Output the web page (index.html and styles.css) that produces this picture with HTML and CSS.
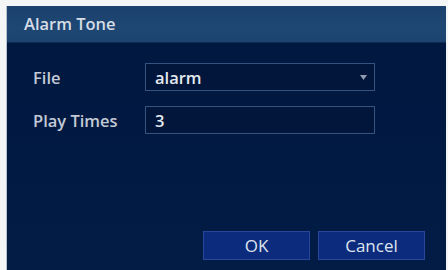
FILE: index.html
```html
<!DOCTYPE html>
<html>
<head>
<meta charset="utf-8">
<link rel="stylesheet" href="styles.css">
</head>
<body>
<div class="dialog">
  <div class="title">Alarm Tone</div>
  <div class="body">
    <div class="row">
      <div class="label">File</div>
      <div class="field select">
        <span>alarm</span>
        <svg class="arrow" width="7" height="5" viewBox="0 0 7 5"><path d="M0 0H7L3.5 5Z" fill="#8f9bb0"/></svg>
      </div>
    </div>
    <div class="row">
      <div class="label">Play Times</div>
      <div class="field"><span>3</span></div>
    </div>
    <div class="spacer"></div>
    <div class="buttons">
      <div class="btn">OK</div>
      <div class="btn">Cancel</div>
    </div>
  </div>
</div>
</body>
</html>
```
FILE: styles.css
```css
html, body {
  margin: 0;
  padding: 0;
  background: #f4f5f7;
  width: 448px;
  height: 270px;
  overflow: hidden;
  font-family: "Open Sans", "Noto Sans", sans-serif;
}
.dialog {
  margin: 6px 2px 0 7px;
  height: 264px;
  display: flex;
  flex-direction: column;
  background: #021a42;
  box-shadow: -1px 0 0 #b9c2cc;
}
.title {
  height: 37px;
  flex: none;
  background: linear-gradient(#1b416d, #1f4773 60%, #1d4470);
  border-bottom: 1px solid #0d2b52;
  color: #d6dde6;
  font-size: 16.5px;
  font-weight: 600;
  line-height: 36px;
  padding-left: 17px;
  box-sizing: border-box;
}
.body {
  flex: 1;
  display: flex;
  flex-direction: column;
  padding: 20px 23px 10px 26px;
  background: linear-gradient(#011840, #021c45);
}
.row {
  display: flex;
  align-items: center;
  margin-bottom: 15px;
}
.label {
  width: 112px;
  color: #c3cad6;
  font-size: 16.5px;
  font-weight: 600;
}
.field {
  width: 230px;
  height: 28px;
  box-sizing: border-box;
  border: 1px solid #36527e;
  background: #01163a;
  display: flex;
  align-items: center;
  padding: 0 7px 0 9px;
  color: #e4e9f0;
  font-size: 16.5px;
  font-weight: 600;
}
.field span { flex: 1; }
.spacer { flex: 1; }
.buttons {
  display: flex;
  justify-content: flex-end;
  gap: 8px;
  margin-right: -2px;
}
.btn {
  width: 107px;
  height: 29px;
  box-sizing: border-box;
  border: 1px solid #27479a;
  background: #0c2b7c;
  color: #dfe5ee;
  font-size: 17px;
  font-weight: 400;
  display: flex;
  align-items: center;
  justify-content: center;
}
```
